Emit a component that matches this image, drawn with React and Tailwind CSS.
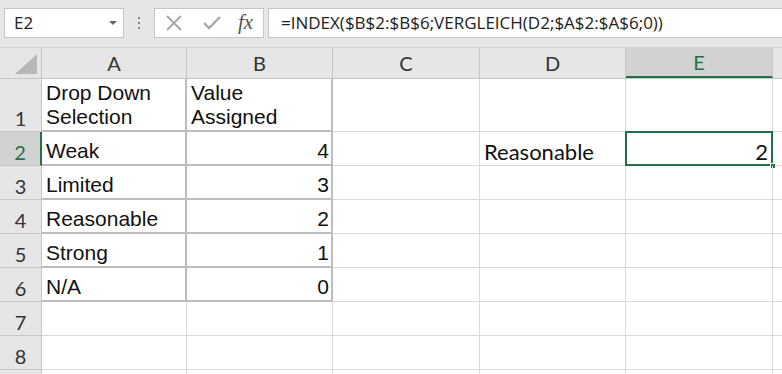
import React from 'react';

const cols = ['A', 'B', 'C', 'D', 'E'];

const rows = [
  { n: 1, h: 'h-[53px]', a: ['Drop Down', 'Selection'], b: ['Value', 'Assigned'] },
  { n: 2, h: 'h-[34px]', a: 'Weak', b: '4', d: 'Reasonable', e: '2' },
  { n: 3, h: 'h-[34px]', a: 'Limited', b: '3' },
  { n: 4, h: 'h-[34px]', a: 'Reasonable', b: '2' },
  { n: 5, h: 'h-[34px]', a: 'Strong', b: '1' },
  { n: 6, h: 'h-[34px]', a: 'N/A', b: '0' },
  { n: 7, h: 'h-[34px]' },
  { n: 8, h: 'h-[34px]' },
  { n: 9, h: 'h-[34px]', hideNum: true },
];

const widths = ['w-[145px]', 'w-[146px]', 'w-[147px]', 'w-[146px]', 'w-[147px]'];

const FormulaBar = () => (
  <div className="h-[48px] bg-[#e6e6e6] flex items-start pt-[8px] pl-[4px] border-b border-[#d4d4d4]">
    <div className="w-[120px] h-[30px] bg-white border border-[#c6c6c6] flex items-center justify-between pl-[9px] pr-[6px]">
      <span className="text-[17px] text-[#222] font-['Open_Sans',sans-serif]">E2</span>
      <svg width="8" height="5" viewBox="0 0 8 5"><path d="M0 0h8L4 4z" fill="#666" /></svg>
    </div>
    <div className="w-[30px] h-[30px] flex flex-col items-center justify-center gap-[3px]">
      <span className="w-[2px] h-[2px] bg-[#888]" />
      <span className="w-[2px] h-[2px] bg-[#888]" />
      <span className="w-[2px] h-[2px] bg-[#888]" />
    </div>
    <div className="w-[110px] h-[30px] bg-white border border-[#c6c6c6] flex items-center pl-[10px] gap-[20px]">
      <svg width="18" height="18" viewBox="0 0 18 18"><path d="M2 2l14 14M16 2L2 16" stroke="#a8a8a8" strokeWidth="2" /></svg>
      <svg width="18" height="16" viewBox="0 0 18 16"><path d="M1 8l5 5L17 2" stroke="#a8a8a8" strokeWidth="2.4" fill="none" /></svg>
      <span className="text-[21px] italic text-[#555] font-['Liberation_Serif',serif] leading-none -mt-[2px] -ml-[3px]">fx</span>
    </div>
    <div className="ml-[4px] flex-1 h-[30px] bg-white border border-[#c6c6c6] border-r-0 flex items-center pl-[12px]">
      <span className="text-[17px] text-[#222] font-['Open_Sans',sans-serif]">=INDEX($B$2:$B$6;VERGLEICH(D2;$A$2:$A$6;0))</span>
    </div>
  </div>
);

const Cell = ({ w, children, right, inTable, calibri, selected }) => (
  <div
    className={`${w} shrink-0 relative flex items-end pb-[1px] pl-[4px] border-r border-b ${
      inTable ? 'border-[#bdbdbd] border-r-2 border-b-2 pr-[2px]' : 'border-[#d9d9d9] pr-[4px]'
    } ${right ? 'justify-end' : ''} ${
      calibri ? "font-['Lato',sans-serif] text-[22px]" : "font-['Liberation_Sans',sans-serif] text-[21px]"
    } text-[#111] leading-[24px]`}
  >
    {children}
    {selected && (
      <>
        <div className="absolute -left-[1px] -top-[1px] -right-[1px] -bottom-[1px] border-2 border-[#217346]" />
        <div className="absolute -right-[4px] -bottom-[4px] w-[6px] h-[6px] bg-[#217346] border border-white" />
      </>
    )}
  </div>
);

export default function App() {
  return (
    <div className="w-[782px] h-[374px] overflow-hidden bg-white">
      <FormulaBar />
      <div className="flex h-[31px] bg-[#e6e6e6] border-b border-[#c6c6c6]">
        <div className="w-[42px] shrink-0 border-r border-[#c6c6c6] flex items-end justify-end pr-[4px] pb-[4px]">
          <svg width="22" height="20" viewBox="0 0 22 20"><path d="M22 0v20H0z" fill="#b8b8b8" /></svg>
        </div>
        {cols.map((c, i) => (
          <div
            key={c}
            className={`${widths[i]} shrink-0 border-r border-[#c6c6c6] flex items-center justify-center text-[20px] font-['Lato',sans-serif] ${
              c === 'E' ? 'bg-[#d2d2d2] text-[#217346] border-b-2 border-b-[#217346]' : 'text-[#333]'
            }`}
          >
            {c}
          </div>
        ))}
        <div className="flex-1" />
      </div>
      {rows.map((r) => (
        <div key={r.n} className={`flex ${r.h}`}>
          <div
            className={`w-[42px] shrink-0 border-b border-[#c6c6c6] flex items-end justify-center pb-[1px] text-[20px] font-['Lato',sans-serif] leading-[24px] ${
              r.n === 2 ? 'bg-[#d2d2d2] text-[#217346] border-r-2 border-r-[#217346]' : 'bg-[#e6e6e6] text-[#333] border-r border-r-[#c6c6c6]'
            }`}
          >
            {r.hideNum ? '' : r.n}
          </div>
          <Cell w={widths[0]} inTable={r.n <= 6}>
            {Array.isArray(r.a) ? (
              <div className="flex flex-col">
                {r.a.map((t) => <span key={t}>{t}</span>)}
              </div>
            ) : r.a}
          </Cell>
          <Cell w={widths[1]} inTable={r.n <= 6} right={!Array.isArray(r.b)}>
            {Array.isArray(r.b) ? (
              <div className="flex flex-col">
                {r.b.map((t) => <span key={t}>{t}</span>)}
              </div>
            ) : r.b}
          </Cell>
          <Cell w={widths[2]} />
          <Cell w={widths[3]} calibri>{r.d}</Cell>
          <Cell w={widths[4]} calibri right selected={r.n === 2}>{r.e}</Cell>
          <div className="flex-1 border-b border-[#d9d9d9]" />
        </div>
      ))}
    </div>
  );
}
